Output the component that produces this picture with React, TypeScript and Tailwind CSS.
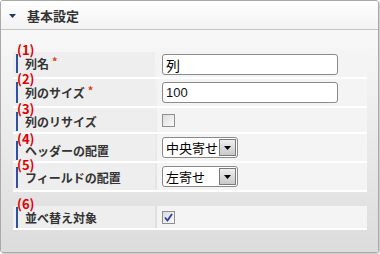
import React from "react";

const FONT = { fontFamily: '"Noto Sans CJK JP", "Noto Sans", sans-serif' };

function Label({ text, required, bar }: { text: string; required?: boolean; bar: string }) {
  return (
    <div className="w-[142px] bg-[#eeeeee] pl-[3px] flex items-stretch">
      <div className={`border-l-2 border-[#34509a] ${bar} pl-[7px] flex items-center text-[12px] font-bold text-[#333] leading-none`}>
        {text}
        {required && <span className="text-[#e0401a] text-[11px] ml-[3px] -mt-[5px]">*</span>}
      </div>
    </div>
  );
}

function Select({ value }: { value: string }) {
  return (
    <div className="w-[76px] h-[21px] bg-white border border-[#8a8a8a] rounded-[3px] flex items-center justify-between pl-[3px] pr-[1px]">
      <span className="text-[13px] text-black leading-none">{value}</span>
      <div className="w-[17px] h-[17px] border border-[#7a7a7a] bg-gradient-to-b from-[#efefef] to-[#c9c9c9] flex items-center justify-center">
        <svg width="7" height="4" viewBox="0 0 7 4"><path d="M0 0H7L3.5 4Z" fill="#000" /></svg>
      </div>
    </div>
  );
}

function Checkbox({ checked }: { checked?: boolean }) {
  return (
    <div className="w-[13px] h-[13px] border border-[#8e8f8f] bg-gradient-to-br from-[#dcdcdc] to-[#fbfbfb] flex items-center justify-center">
      {checked && (
        <svg width="9" height="9" viewBox="0 0 9 9">
          <path d="M1 4.5L3.5 7.5L8 1" fill="none" stroke="#2b3fa3" strokeWidth="1.8" />
        </svg>
      )}
    </div>
  );
}

function Row({ h, label, required, bar, children }: { h: string; label: string; required?: boolean; bar: string; children: React.ReactNode }) {
  return (
    <div className={`flex ${h} border-b-2 border-white`}>
      <Label text={label} required={required} bar={bar} />
      <div className="w-[2px]" />
      <div className="flex-1 bg-[#f4f4f4] pl-[5px] flex items-center">{children}</div>
    </div>
  );
}

function Note({ n, top }: { n: number; top: string }) {
  return (
    <div className={`absolute left-[16px] ${top} text-[13px] font-bold text-[#e00000] leading-none`}>({n})</div>
  );
}

export default function App() {
  return (
    <div className="w-[380px] h-[254px] bg-white" style={FONT}>
      <div className="w-[379px] h-[253px] border border-[#a9a9a9] rounded-[3px] shadow-[1px_1px_0_#cfcfcf] flex flex-col overflow-hidden">
        <div className="h-[29px] shrink-0 border-b border-[#c4c4c4] bg-gradient-to-b from-white to-[#f3f3f3] flex items-center pl-[8px]">
          <svg width="7" height="4" viewBox="0 0 7 4" className="mt-[1px]"><path d="M0 0H7L3.5 4Z" fill="#1f3a66" /></svg>
          <span className="ml-[11px] text-[13px] font-bold text-[#333] leading-none">基本設定</span>
        </div>
        <div className="relative flex-1 bg-gradient-to-b from-[#f8f8f8] to-[#dcdcdc] pl-[12px] pr-[11px] pt-[22px]">
          <Row h="h-[27px]" label="列名" required bar="mt-[2px] mb-[4px]">
            <div className="w-[176px] h-[21px] bg-white border border-[#8a8a8a] rounded-[3px] flex items-center pl-[3px] text-[14px] text-black leading-none">列</div>
          </Row>
          <Row h="h-[29px]" label="列のサイズ" required bar="mt-[3px] mb-[3px]">
            <div className="w-[176px] h-[21px] bg-white border border-[#8a8a8a] rounded-[3px] flex items-center pl-[3px] text-[13px] text-[#111] leading-none" style={{ fontFamily: '"Liberation Sans", sans-serif' }}>100</div>
          </Row>
          <Row h="h-[26px]" label="列のリサイズ" bar="mt-[4px] mb-[1px]">
            <Checkbox />
          </Row>
          <Row h="h-[29px]" label="ヘッダーの配置" bar="mt-[7px] mb-[1px]">
            <Select value="中央寄せ" />
          </Row>
          <Row h="h-[29px]" label="フィールドの配置" bar="mt-[4px] mb-[2px]">
            <Select value="左寄せ" />
          </Row>
          <div className="h-[14px]" />
          <Row h="h-[24px]" label="並べ替え対象" bar="mt-[1px] mb-0">
            <Checkbox checked />
          </Row>
          <Note n={1} top="top-[13px]" />
          <Note n={2} top="top-[42px]" />
          <Note n={3} top="top-[72px]" />
          <Note n={4} top="top-[102px]" />
          <Note n={5} top="top-[128px]" />
          <Note n={6} top="top-[167px]" />
        </div>
      </div>
    </div>
  );
}
